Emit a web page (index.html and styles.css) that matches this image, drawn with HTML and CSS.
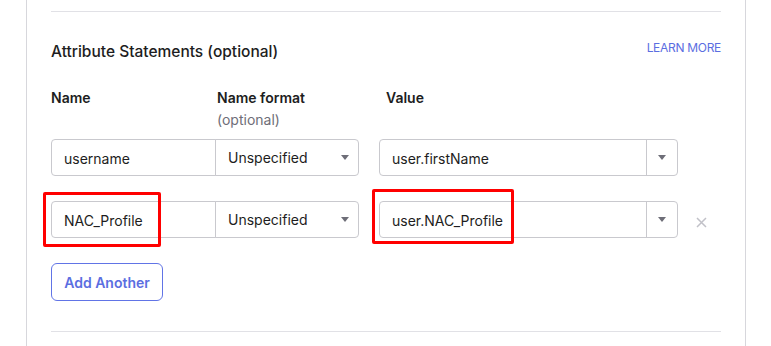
FILE: index.html
```html
<!DOCTYPE html>
<html lang="en">
  <head>
    <meta charset="UTF-8" />
    <title>Attribute Statements</title>
    <link rel="stylesheet" href="styles.css">
  </head>
  <body>
    <div class="card">
      <div class="divider"></div>

      <div class="section-header">
        <h2 class="section-title">Attribute Statements (optional)</h2>
        <a class="learn-more" href="#">LEARN MORE</a>
      </div>

      <div class="labels">
        <div class="label label-name">Name</div>
        <div class="label label-format">Name format<span class="hint">(optional)</span></div>
        <div class="label label-value">Value</div>
      </div>

      <div class="attr-row">
        <div class="field field-name">username</div>
        <div class="field field-select">
          Unspecified
          <svg class="caret" width="8" height="5" viewBox="0 0 8 5"><path d="M0 0h8L4 5z" fill="#6e6e78"/></svg>
        </div>
        <div class="field field-value">
          <span class="value-text">user.firstName</span>
          <span class="value-toggle">
            <svg width="8" height="5" viewBox="0 0 8 5"><path d="M0 0h8L4 5z" fill="#6e6e78"/></svg>
          </span>
        </div>
      </div>

      <div class="attr-row row-second">
        <div class="field field-name">NAC_Profile</div>
        <div class="field field-select">
          Unspecified
          <svg class="caret" width="8" height="5" viewBox="0 0 8 5"><path d="M0 0h8L4 5z" fill="#6e6e78"/></svg>
        </div>
        <div class="field field-value">
          <span class="value-text">user.NAC_Profile</span>
          <span class="value-toggle">
            <svg width="8" height="5" viewBox="0 0 8 5"><path d="M0 0h8L4 5z" fill="#6e6e78"/></svg>
          </span>
        </div>
        <button class="remove" type="button" aria-label="Remove">
          <svg width="11" height="11" viewBox="0 0 11 11"><path d="M1 1l9 9M10 1l-9 9" stroke="#c1c1c8" stroke-width="1.5"/></svg>
        </button>

        <!-- annotation boxes -->
        <div class="mark mark-name"></div>
        <div class="mark mark-value"></div>
      </div>

      <button class="btn-add" type="button">Add Another</button>

      <div class="divider divider-bottom"></div>
    </div>
  </body>
</html>
```

FILE: styles.css
```css
body {
  margin: 0;
  font-family: Inter, "Noto Sans", Arial, sans-serif;
  color: #1d1d21;
  background: #fff;
}
.card {
  margin-left: 26px;
  width: 670px;
  padding: 11px 24px 14px;
  border-left: 1px solid #d7d7dc;
  border-right: 1px solid #d7d7dc;
}
.divider {
  height: 1px;
  background-color: #e1e1e6;
}
.divider-bottom {
  margin-top: 30px;
}
.section-header {
  display: flex;
  justify-content: space-between;
  align-items: flex-start;
  margin-top: 30px;
}
.section-title {
  margin: 0;
  font-size: 15.5px;
  line-height: 20px;
  font-weight: 500;
}
.learn-more {
  font-size: 12px;
  line-height: 12px;
  font-weight: 400;
  letter-spacing: -0.3px;
  color: #5b6ee1;
  text-decoration: none;
}
.labels {
  display: flex;
  margin-top: 25px;
}
.label {
  font-size: 14px;
  line-height: 22px;
  font-weight: 600;
}
.label-name {
  width: 166px;
}
.label-format {
  width: 169px;
}
.hint {
  display: block;
  font-weight: 400;
  color: #6e6e78;
}
.attr-row {
  position: relative;
  display: flex;
  align-items: center;
  margin-top: 8px;
}
.row-second {
  margin-top: 25px;
}
.field {
  box-sizing: border-box;
  height: 37px;
  border: 1px solid #c9c9ce;
  font-size: 14px;
  line-height: 36px;
  padding-top: 1px;
  color: #1d1d21;
  padding-left: 12px;
}
.field-name {
  width: 165px;
  border-radius: 4px 0 0 4px;
}
.field-select {
  display: flex;
  justify-content: space-between;
  align-items: center;
  width: 144px;
  margin-left: -1px;
  padding-right: 9px;
  padding-top: 0;
  line-height: 35px;
  border-radius: 0 4px 4px 0;
}
.field-value {
  display: flex;
  width: 299px;
  margin-left: 20px;
  padding-left: 12px;
  border-radius: 4px;
}
.value-text {
  flex-grow: 1;
}
.value-toggle {
  display: flex;
  align-items: center;
  justify-content: center;
  width: 30px;
  margin-top: -1px;
  border-left: 1px solid #c9c9ce;
}
.remove {
  margin: 6px 0 0 18px;
  padding: 0;
  border: 0;
  background: none;
  line-height: 0;
}
.mark {
  position: absolute;
  box-sizing: border-box;
  border: 3px solid #ff0000;
  border-radius: 2px;
  height: 55px;
}
.mark-name {
  left: -8px;
  top: -9px;
  width: 118px;
}
.mark-value {
  left: 321px;
  top: -12px;
  width: 142px;
}
.btn-add {
  display: block;
  box-sizing: border-box;
  margin-top: 25px;
  height: 38px;
  width: 112px;
  border: 1px solid #6174e6;
  border-radius: 6px;
  background: #fff;
  color: #5b6ee1;
  font-family: inherit;
  font-size: 14px;
  font-weight: 600;
}
```
